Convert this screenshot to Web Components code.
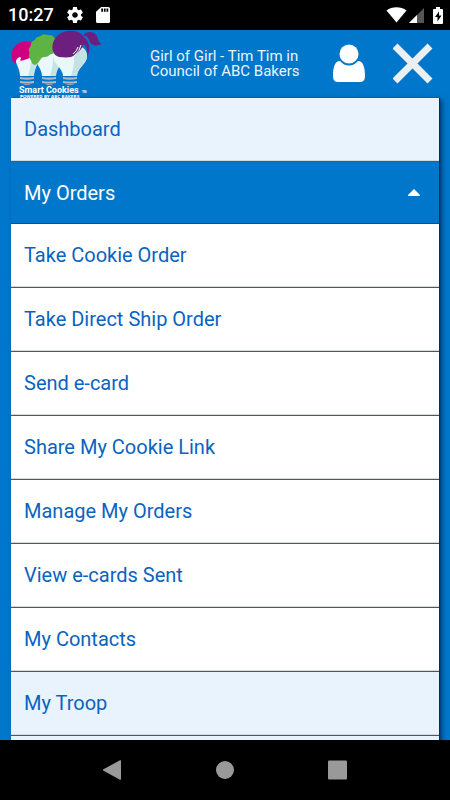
<!DOCTYPE html>
<html lang="en">
<head>
<meta charset="utf-8">
<meta name="viewport" content="width=device-width, initial-scale=1">
<title>Smart Cookies</title>
<style>
html, body { height: 100%; margin: 0; }
body { font-family: Roboto, "Liberation Sans", sans-serif; background: #000; }
</style>
</head>
<body>
<phone-screen>
  <status-bar slot="status" time="10:27"></status-bar>
  <app-header>Girl of Girl - Tim Tim in Council of ABC Bakers</app-header>
  <nav-menu>
    <menu-item top>Dashboard</menu-item>
    <menu-group label="My Orders">
      <menu-item>Take Cookie Order</menu-item>
      <menu-item>Take Direct Ship Order</menu-item>
      <menu-item>Send e-card</menu-item>
      <menu-item>Share My Cookie Link</menu-item>
      <menu-item>Manage My Orders</menu-item>
      <menu-item>View e-cards Sent</menu-item>
      <menu-item>My Contacts</menu-item>
    </menu-group>
    <menu-item top>My Troop</menu-item>
    <menu-item top></menu-item>
  </nav-menu>
  <system-nav slot="system"></system-nav>
</phone-screen>

<script>
class Base extends HTMLElement {
  constructor() {
    super();
    this.attachShadow({ mode: 'open' });
  }
  connectedCallback() {
    this.shadowRoot.innerHTML = '<style>*{box-sizing:border-box}' + this.css() + '</style>' + this.html();
    this.ready();
  }
  ready() {}
}

customElements.define('phone-screen', class extends Base {
  css() { return `
    :host { display: flex; flex-direction: column; height: 100vh; }
    main { flex: 1; min-height: 0; overflow: hidden; background: #0077ca; }`; }
  html() { return `<slot name="status"></slot><main><slot></slot></main><slot name="system"></slot>`; }
});

customElements.define('status-bar', class extends Base {
  css() { return `
    :host { display: flex; align-items: center; height: 30px; padding: 0 7px 0 8px; background: #000; color: #fff; flex: none; }
    time { font-size: 18px; line-height: 30px; font-weight: 500; margin-right: 13px; }
    svg { display: block; fill: #fff; }
    .gear { margin-right: 13px; }
    .wifi { margin-left: auto; margin-right: 2px; }
    .signal { margin-right: 8px; }`; }
  html() { return `
    <time>${this.getAttribute('time')}</time>
    <svg class="gear" width="16" height="16" viewBox="2 2 20 20"><path d="M19.43 12.98c.04-.32.07-.64.07-.98s-.03-.66-.07-.98l2.11-1.65c.19-.15.24-.42.12-.64l-2-3.46c-.12-.22-.39-.3-.61-.22l-2.49 1c-.52-.4-1.08-.73-1.69-.98l-.38-2.65C14.46 2.18 14.25 2 14 2h-4c-.25 0-.46.18-.49.42l-.38 2.65c-.61.25-1.17.59-1.69.98l-2.49-1c-.23-.09-.49 0-.61.22l-2 3.46c-.13.22-.07.49.12.64l2.11 1.65c-.04.32-.07.65-.07.98s.03.66.07.98l-2.11 1.65c-.19.15-.24.42-.12.64l2 3.46c.12.22.39.3.61.22l2.49-1c.52.4 1.08.73 1.69.98l.38 2.65c.03.24.24.42.49.42h4c.25 0 .46-.18.49-.42l.38-2.65c.61-.25 1.17-.59 1.69-.98l2.49 1c.23.09.49 0 .61-.22l2-3.46c.12-.22.07-.49-.12-.64l-2.110-1.650zM12 15.500c-1.930 0-3.500-1.570-3.500-3.500s1.570-3.500 3.500-3.500 3.500 1.570 3.500 3.500-1.570 3.500-3.500 3.500z"/></svg>
    <svg width="14" height="16" viewBox="4 2 16 20" preserveAspectRatio="none"><path d="M18 2h-8L4.020 8 4 20c0 1.100.9 2 2 2h12c1.100 0 2-.9 2-2V4c0-1.100-.9-2-2-2zm-6 6h-2V4h2v4zm3 0h-2V4h2v4zm3 0h-2V4h2v4z"/></svg>
    <svg class="wifi" width="21" height="16" viewBox="0 0 21 16"><path d="M10.500 15.500 .5 3.500C6-.8 15-.8 20.500 3.500z"/></svg>
    <svg class="signal" width="16" height="15" viewBox="0 0 16 15"><path d="M0 15 15 0v15z" fill="#555"/><path d="M0 15 8 7v8z"/></svg>
    <svg width="10" height="17" viewBox="0 0 10 17"><path fill-rule="evenodd" d="M3 0h4v2h2q1 0 1 1v13q0 1-1 1H1q-1 0-1-1V3q0-1 1-1h2zM6 4.500 2 10h2.500v4.500L8.500 8.500H6z"/></svg>`; }
});

customElements.define('cookie-logo', class extends Base {
  css() { return `:host { display: block; flex: none; } svg { display: block; }
    text { font-family: Roboto, sans-serif; fill: #fff; font-weight: 700; }
    .tagline { font-family: "DejaVu Sans", sans-serif; }`; }
  html() {
    const bulb = (x, r) => `<g transform="translate(${x} 0)">
      <path d="M${-r} 26Q${-r} 15 0 15T${r} 26C${r} 34 7 38 7 46H-7C-7 38 ${-r} 34 ${-r} 26z" fill="#e9f8fa"/>
      <path d="M3 16Q${r} 18 ${r} 26C${r} 34 7 38 7 46H1Q6 32 3 16z" fill="#c3e3e4"/>
      <path d="M-7 47Q0 48 7 47V49Q0 50.500 -7 49zM-7 51Q0 52 7 51V53Q0 54 -7 53z" fill="#b2bbc5"/>
      <path d="M-4 54H4L2 55H-2z" fill="#8aa3bb"/></g>`;
    return `<svg width="92" height="69" viewBox="0 0 92 69" role="img" aria-label="Smart Cookies">
      ${bulb(16, 12)}
      <path d="M5 34C-1 31-1 21 4 16 9 10 18 10 23 14V26L16 29Q9 32 9 30 11 28 9 27C6 28 4 31 5 34z" fill="#cf007f"/>
      ${bulb(38, 14)}
      <path d="M24 35C20 34 21 31 19 29 17 26 19 24 18 21 17 18 20 17 20 14 20 11 24 11 25 8 27 6 29 7 31 5 34 3 36 6 39 5 42 5 43 8 45 9L43 24C39 23 38 27 34 27 29 26 30 32 24 35z" fill="#5eb344"/>
      ${bulb(59, 17)}
      <path d="M48 27C39 24 40 12 46 6 53-1 68-1 73 7 79 12 80 20 76 27 77 20 75 16 73 14 70 20 66 25 60 27 55 28 52 27 48 27zM73 4C77 1 83 1 86 6 87 10 88 13 91 14 87 16 80 17 78 10 77 7 76 6 73 6z" fill="#6d1f80"/>
      <path d="M70 15Q69 21 63 26M67 17Q66 21 62 24" fill="none" stroke="#fff" stroke-width="1"/>
      <text x="8" y="63" font-size="9">Smart Cookies</text>
      <text x="71" y="63" font-size="3">TM</text>
      <text class="tagline" x="9" y="68" font-size="4">POWERED BY ABC BAKERS</text>
    </svg>`;
  }
});

customElements.define('app-header', class extends Base {
  css() { return `
    :host { display: block; color: #fff; }
    header { display: flex; align-items: center; height: 68px; padding: 0 17px 0 11px; }
    p { flex: 1; margin: 0 0 0 47px; max-width: 160px; font-size: 15px; line-height: 15px; color: #eaf4fc; }
    button { border: 0; padding: 0; background: none; display: block; flex: none; }
    .user { margin-left: auto; margin-right: 26px; }
    svg { display: block; }`; }
  html() { return `<header>
    <cookie-logo></cookie-logo>
    <p><slot></slot></p>
    <button class="user" aria-label="Account"><svg width="34" height="40" viewBox="0 0 34 40"><circle cx="16" cy="10" r="9.500" fill="#fff"/><path d="M7 17Q11 21.500 16 21.500T25 17C30 17 32 23 32 32Q32 38 27 38H5Q0 38 0 32C0 23 2 17 7 17z" fill="#fff"/></svg></button>
    <button aria-label="Close menu"><svg width="40" height="42" viewBox="0 0 40 42"><path d="M2 3 37 38M37 3 2 38" stroke="#eceff1" stroke-width="7"/></svg></button>
  </header>`; }
});

customElements.define('nav-menu', class extends Base {
  css() { return `
    :host { display: block; margin: 0 11px; }
    nav { box-shadow: 1px 0 1px #002a78, 3px 2px 5px #003a70; }`; }
  html() { return `<nav aria-label="Main"><slot></slot></nav>`; }
});

customElements.define('menu-item', class extends Base {
  css() { return `
    :host { display: block; }
    a { display: block; height: 64px; padding: 0 13px; border-bottom: 1px solid #555;
        box-shadow: inset 0 -1px 0 #d4d9dd;
        background: #fff; color: #0b63c0; font-size: 20px; line-height: 62px; text-decoration: none; }
    :host([top]) a { background: #e9f3fe; }`; }
  html() { return `<a href="#"><slot></slot></a>`; }
});

customElements.define('menu-group', class extends Base {
  css() { return `
    :host { display: block; }
    button { display: flex; align-items: center; justify-content: space-between; width: 100%; height: 62px;
      padding: 0 19px 0 13px; border: 0; border-bottom: 1px solid #0050b0; background: #0077ca; color: #fff;
      font: 20px/62px Roboto, "Liberation Sans", sans-serif; text-align: left; }
    svg { display: block; }`; }
  html() { return `<button aria-expanded="true"><span>${this.getAttribute('label')}</span>
    <svg width="12" height="7" viewBox="0 0 12 7"><path d="M0 7V6L6 0 12 6V7z" fill="#fff"/></svg></button>
    <div><slot></slot></div>`; }
  ready() {
    const b = this.shadowRoot.querySelector('button'), d = this.shadowRoot.querySelector('div');
    b.onclick = () => { d.hidden = !d.hidden; b.setAttribute('aria-expanded', String(!d.hidden)); };
  }
});

customElements.define('system-nav', class extends Base {
  css() { return `
    :host { display: flex; align-items: center; justify-content: center; gap: 92px; height: 60px; background: #000; flex: none; }
    button { border: 0; padding: 0; background: none; display: block; }
    svg { display: block; fill: #999; }`; }
  html() { return `
    <button aria-label="Back"><svg width="20" height="20" viewBox="1 0 20 20"><path d="M1 9.500 18 .3Q19 0 19 1V19Q19 20 18 19.700L1 10.500Q.3 10 1 9.500z"/></svg></button>
    <button aria-label="Home"><svg width="20" height="20" viewBox="0 0 20 20"><circle cx="10" cy="10" r="9"/></svg></button>
    <button aria-label="Recent apps"><svg width="20" height="20" viewBox="0 0 20 20"><rect x="1" y="0.500" width="19" height="19" rx="1"/></svg></button>`; }
});
</script>
</body>
</html>
